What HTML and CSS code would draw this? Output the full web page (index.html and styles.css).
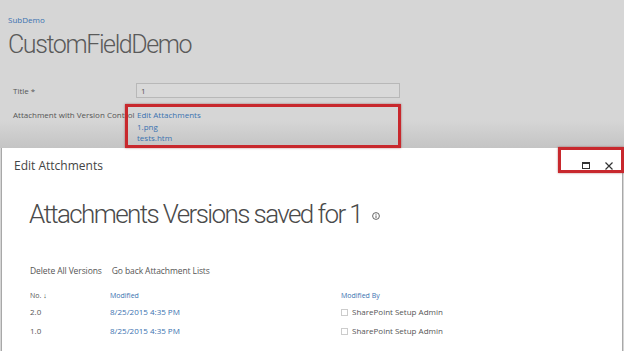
FILE: index.html
```html
<!DOCTYPE html>
<html lang="en">
<head>
  <meta charset="UTF-8" />
  <title>CustomFieldDemo - Edit Attachments</title>
  <link rel="stylesheet" href="styles.css">
</head>
<body>

  <div class="page">
    <a class="crumb" href="#">SubDemo</a>
    <h1 class="site-title">CustomFieldDemo</h1>

    <div class="form">
      <div class="form-row">
        <span class="label">Title *</span>
        <input class="field" type="text" value="1">
      </div>
      <div class="form-row">
        <span class="label">Attachment with Version Control</span>
        <div class="links">
          <a href="#">Edit Attachments</a>
          <a href="#">1.png</a>
          <a href="#">tests.htm</a>
        </div>
      </div>
    </div>

    <div class="mark mark-links"></div>
  </div>

  <div class="dialog">
    <div class="dialog-head">
      <span class="dialog-title">Edit Attchments</span>
      <div class="dialog-tools">
        <svg width="8" height="7" viewBox="0 0 8 7"><rect x="0.5" y="0.5" width="7" height="6" fill="none" stroke="#333"/><line x1="0" y1="1.5" x2="8" y2="1.5" stroke="#333"/></svg>
        <svg width="8" height="8" viewBox="0 0 8 8"><path d="M0.5 0.5L7.5 7.5M7.5 0.5L0.5 7.5" stroke="#333" stroke-width="1.2"/></svg>
      </div>
      <div class="mark mark-tools"></div>
    </div>

    <h2 class="versions-title">Attachments Versions saved for 1
      <svg class="info" width="8" height="8" viewBox="0 0 8 8"><circle cx="4" cy="4" r="3.4" fill="none" stroke="#555" stroke-width="0.9"/><line x1="4" y1="3.4" x2="4" y2="6" stroke="#555" stroke-width="0.9"/><circle cx="4" cy="2.2" r="0.5" fill="#555"/></svg>
    </h2>

    <div class="actions">
      <a href="#">Delete All Versions</a>
      <a href="#">Go back Attachment Lists</a>
    </div>

    <table class="versions">
      <thead>
        <tr>
          <th>No. <span class="sort">&#8595;</span></th>
          <th class="blue">Modified</th>
          <th class="blue">Modified By</th>
        </tr>
      </thead>
      <tbody>
        <tr>
          <td>2.0</td>
          <td><a href="#">8/25/2015 4:35 PM</a></td>
          <td><span class="box"></span>SharePoint Setup Admin</td>
        </tr>
        <tr>
          <td>1.0</td>
          <td><a href="#">8/25/2015 4:35 PM</a></td>
          <td><span class="box"></span>SharePoint Setup Admin</td>
        </tr>
      </tbody>
    </table>
  </div>

</body>
</html>
```

FILE: styles.css
```css
* {
  box-sizing: border-box;
}

html, body {
  height: 100%;
}

body {
  margin: 0;
  background: #d5d5d5;
  font-family: 'Open Sans', 'Noto Sans', sans-serif;
  color: #555;
  overflow: hidden;
  display: flex;
  flex-direction: column;
}

a {
  color: #3a72b0;
  text-decoration: none;
}

.page {
  position: relative;
  height: 148px;
  flex-shrink: 0;
  padding: 14px 0 0 8px;
  background: linear-gradient(to bottom, #d6d6d6 0, #d6d6d6 120px, #c4c4c4 148px);
}

.crumb {
  display: block;
  font-size: 8px;
  line-height: 12px;
}

.site-title {
  margin: 4px 0 0 0;
  font-family: Roboto, sans-serif;
  font-size: 25px;
  font-weight: 300;
  line-height: 30px;
  color: #5a5a5a;
  letter-spacing: -1.4px;
}

.form {
  margin: 25px 0 0 5px;
  display: flex;
  flex-direction: column;
  gap: 11px;
}

.form-row {
  display: grid;
  grid-template-columns: 123px 264px;
  align-items: start;
}

.label {
  font-size: 8px;
  line-height: 11px;
  color: #555;
  white-space: nowrap;
}

.field {
  height: 15px;
  border: 1px solid #b8b8b8;
  background: #d9d9d9;
  font: 8px 'Open Sans', sans-serif;
  color: #555;
  padding: 0 4px;
  margin-top: -2px;
}

.links {
  display: flex;
  flex-direction: column;
  font-size: 8px;
  line-height: 11.5px;
  padding-left: 1px;
}

.mark {
  position: absolute;
  border: 3px solid #c8282d;
  box-shadow: 0 0 2px rgba(120, 0, 0, 0.5);
}

.mark-links {
  left: 125px;
  top: 104px;
  width: 276px;
  height: 44px;
}

.dialog {
  flex: 1;
  margin: 0 1px 0 1px;
  background: #fff;
  border-left: 1px solid #a8a8a8;
  border-right: 1px solid #a8a8a8;
  padding: 0 0 0 12px;
}

.dialog-head {
  position: relative;
  height: 36px;
  display: flex;
  align-items: center;
  justify-content: space-between;
}

.dialog-title {
  font-size: 12px;
  color: #444;
  margin-top: -1px;
}

.dialog-tools {
  display: flex;
  align-items: center;
  gap: 15px;
  padding-right: 9px;
  margin-top: -1px;
}

.mark-tools {
  right: -2px;
  top: -1px;
  width: 66px;
  height: 26px;
}

.versions-title {
  margin: 13px 0 0 15px;
  font-family: Roboto, sans-serif;
  font-size: 26px;
  font-weight: 300;
  line-height: 34px;
  color: #4a4a4a;
  letter-spacing: -1.6px;
}

.info {
  vertical-align: 3px;
  margin-left: 5px;
}

.actions {
  margin: 34px 0 0 16px;
  display: flex;
  gap: 10px;
  font-size: 8.5px;
  letter-spacing: -0.1px;
}

.actions a {
  color: #555;
}

.versions {
  margin: 15px 0 0 14px;
  border-collapse: collapse;
  font-size: 8px;
  color: #555;
}

.versions th {
  font-weight: normal;
  text-align: left;
  font-size: 7px;
  height: 11px;
  padding: 0 2px;
  vertical-align: top;
}

.versions th.blue {
  color: #3a72b0;
}

.versions td {
  height: 19px;
  padding: 0 2px;
}

.versions th:nth-child(1), .versions td:nth-child(1) {
  width: 80px;
}

.versions th:nth-child(2), .versions td:nth-child(2) {
  width: 231px;
}

.sort {
  font-size: 7px;
  color: #333;
}

.box {
  display: inline-block;
  width: 7px;
  height: 7px;
  border: 1px solid #ccc;
  margin-right: 4px;
  vertical-align: -1px;
}
```
